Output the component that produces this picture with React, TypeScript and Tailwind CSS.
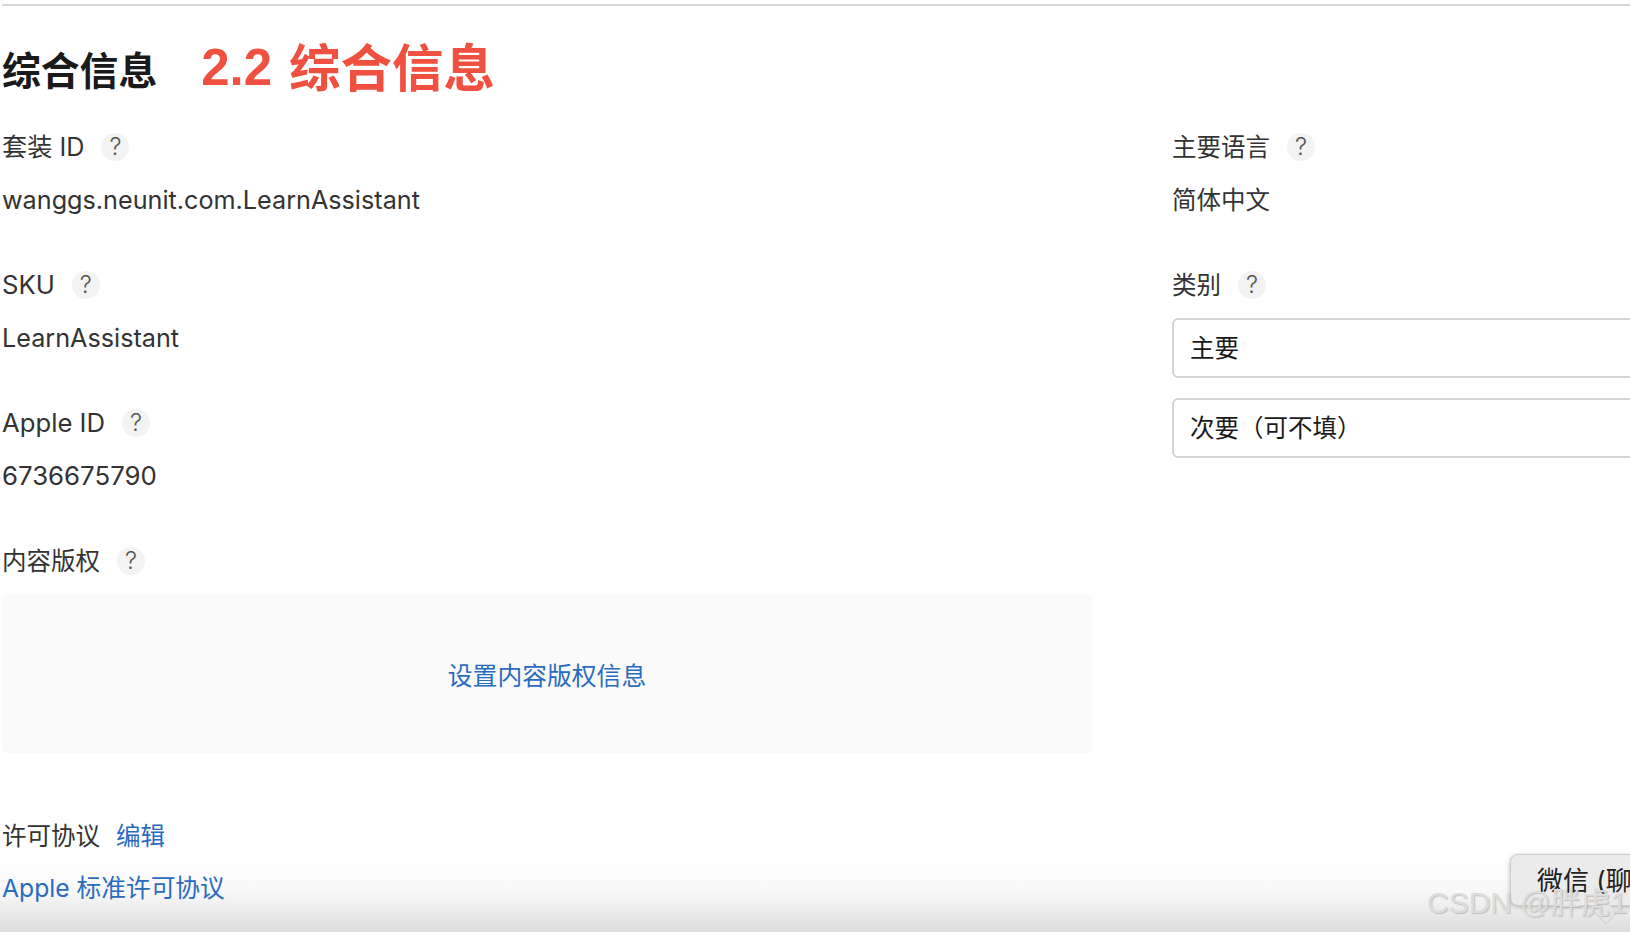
const FONT = "font-['Inter','Noto_Sans_CJK_SC',sans-serif]";

function Help() {
  return (
    <span className="ml-[17px] flex h-[28px] w-[28px] items-center justify-center rounded-full bg-[#f3f3f3] text-[24px] font-light leading-none text-[#555]">
      ?
    </span>
  );
}

function Label({ text, size = "text-[24.5px]" }: { text: string; size?: string }) {
  return (
    <div className={`flex h-[32px] items-center leading-[32px] text-[#333] ${size}`}>
      <span>{text}</span>
      <Help />
    </div>
  );
}

function Field({
  label,
  value,
  labelSize,
  valueSize,
}: {
  label: string;
  value: string;
  labelSize?: string;
  valueSize: string;
}) {
  return (
    <div className="mb-[51px]">
      <Label text={label} size={labelSize} />
      <div className={`mt-[19px] h-[36px] leading-[36px] text-[#333] ${valueSize}`}>{value}</div>
    </div>
  );
}

function SelectBox({ text }: { text: string }) {
  return (
    <div className="flex h-[60px] w-[600px] items-center rounded-[6px] border-2 border-[#d4d4d4] pl-[16px] text-[24.5px] text-[#1a1a1a]">
      {text}
    </div>
  );
}

export default function App() {
  return (
    <div className={`relative h-[932px] w-[1630px] overflow-hidden bg-white ${FONT}`}>
      <div className="absolute bottom-0 left-0 h-[76px] w-full bg-gradient-to-b from-[#ffffff] via-[#f7f7f7] to-[#dcdcdc]" />
      <div className="relative z-10">
        <div className="ml-[2px] mt-[4px] h-[2px] bg-[#d4d4d4]" />
        <div className="ml-[2px] flex h-[125px] items-start pt-[32px]">
          <h1 className="mt-[8px] text-[38.8px] font-bold leading-[50px] text-[#1a1a1a]">综合信息</h1>
          <div className="ml-[44px] flex items-center gap-[17px] font-bold leading-[60px] text-[#ef5040]">
            <span className="font-['Liberation_Sans',sans-serif] text-[51px]">2.2</span>
            <span className="text-[51.5px]">综合信息</span>
          </div>
        </div>
        <div className="ml-[2px] flex">
          <div className="w-[1090px] shrink-0">
            <Field label="套装 ID" labelSize="text-[25.2px]" value="wanggs.neunit.com.LearnAssistant" valueSize="text-[25.2px]" />
            <Field label="SKU" labelSize="text-[25.7px]" value="LearnAssistant" valueSize="text-[25.2px]" />
            <Field label="Apple ID" labelSize="text-[25.7px]" value="6736675790" valueSize="text-[25.8px]" />
            <Label text="内容版权" />
            <div className="mt-[17px] flex h-[159px] items-center justify-center rounded-[6px] bg-[#fafafa] pt-[7px] text-[24.8px] text-[#2a6bc0]">
              设置内容版权信息
            </div>
            <div className="mt-[67px] flex h-[32px] items-center text-[24.5px] text-[#333]">
              <span>许可协议</span>
              <span className="ml-[16px] text-[#2a6bc0]">编辑</span>
            </div>
            <div className="mt-[18px] h-[36px] text-[24.7px] leading-[36px] text-[#2a6bc0]">Apple 标准许可协议</div>
          </div>
          <div className="ml-[80px] shrink-0">
            <Field label="主要语言" value="简体中文" valueSize="text-[24.5px]" />
            <Label text="类别" />
            <div className="mt-[17px] flex flex-col gap-[20px]">
              <SelectBox text="主要" />
              <SelectBox text="次要（可不填）" />
            </div>
          </div>
        </div>
      </div>
      <div className="absolute left-[1510px] top-[854px] z-20 h-[52px] w-[140px] rounded-[8px] border border-[#cfcfcf] bg-[#ebebeb] pl-[26px] pt-[1px] text-[26px] leading-[50px] whitespace-nowrap text-[#222] shadow-[0_1px_4px_#0004]">
        微信 (聊天)
      </div>
      <div className="absolute left-[1598px] top-[905px] z-20 h-[16px] w-[16px] rotate-45 border-b border-r border-[#cfcfcf] bg-[#e6e6e6]" />
      <div className="absolute left-[1427px] top-[884px] z-30 font-['Liberation_Sans','Noto_Sans_CJK_SC',sans-serif] text-[30px] leading-[38px] whitespace-nowrap text-[#dcdcdc] [text-shadow:1px_1px_1px_#9998]">
        CSDN @胖虎1
      </div>
    </div>
  );
}
